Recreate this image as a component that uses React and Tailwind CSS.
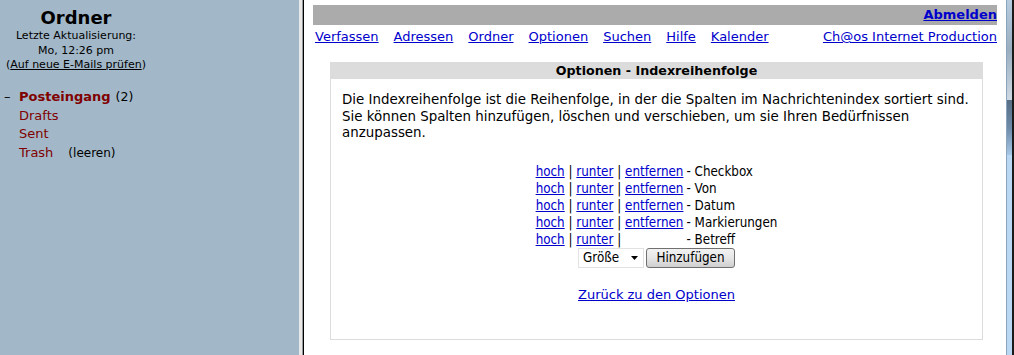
const folders = [
  { name: "Posteingang", extra: "(2)", bold: true, open: true },
  { name: "Drafts" },
  { name: "Sent" },
  { name: "Trash", extra: "(leeren)", gap: true },
];

const navLinks = ["Verfassen", "Adressen", "Ordner", "Optionen", "Suchen", "Hilfe", "Kalender"];

const columns = [
  { label: "Checkbox", remove: true },
  { label: "Von", remove: true },
  { label: "Datum", remove: true },
  { label: "Markierungen", remove: true },
  { label: "Betreff", remove: false },
];

const verdana = { fontFamily: '"DejaVu Sans", Verdana, sans-serif' };
const tahoma = { fontFamily: '"DejaVu Sans Condensed", "DejaVu Sans", Tahoma, sans-serif', fontStretch: "condensed" };

function LeftFrame() {
  return (
    <div className="w-[299px] h-full bg-[#a2b8c8] shrink-0" style={verdana}>
      <div className="w-[152px] flex flex-col items-center pt-[7px] text-black">
        <div className="text-[18px] font-bold leading-[22px]">Ordner</div>
        <div className="text-[11px] leading-[14px]">Letzte Aktualisierung:</div>
        <div className="text-[11px] leading-[14px] mt-[1px]">Mo, 12:26 pm</div>
        <div className="text-[11px] leading-[14px]">
          (<a href="#" className="underline">Auf neue E-Mails prüfen</a>)
        </div>
      </div>
      <div className="mt-[16px] flex flex-col text-[13px] leading-[18.7px]">
        {folders.map((f) => (
          <div key={f.name} className="flex items-center">
            <span className="w-[19px] pl-[4px] text-black">{f.open ? "–" : ""}</span>
            <a href="#" className={`text-[#800000] ${f.bold ? "font-bold" : ""}`}>
              {f.name}
            </a>
            {f.extra && (
              <span className={`text-[#000000] ${f.gap ? "ml-[15px] text-[12px]" : "ml-[5px] text-[12.5px]"}`}>{f.extra}</span>
            )}
          </div>
        ))}
      </div>
    </div>
  );
}

function FrameDivider() {
  return (
    <div className="flex h-full shrink-0">
      <div className="w-[3px] bg-[#e8e8e8]" />
      <div className="w-[1px] bg-[#9a9a9a]" />
      <div className="w-[1px] bg-black" />
    </div>
  );
}

function Scrollbar() {
  return (
    <div className="flex h-full shrink-0">
      <div className="w-[1px] bg-[#8aa4bc]" />
      <div className="w-[5px] flex flex-col">
        <div className="h-[100px] bg-gradient-to-b from-[#b8cde0] via-[#9aaec0] to-[#cfd9e3]" />
        <div className="h-[55px] bg-gradient-to-b from-[#586e84] via-[#6d8aa8] to-[#a8c8e8]" />
        <div className="flex-1 bg-[#b9d6f2]" />
      </div>
      <div className="w-[2px] bg-[#1a1a1a]" />
    </div>
  );
}

function OrderRow({ col }) {
  return (
    <>
      <div className="whitespace-pre text-[#000]">
        <a href="#" className="text-[#0000cc] underline">hoch</a>
        {" | "}
        <a href="#" className="text-[#0000cc] underline">runter</a>
        {" | "}
        {col.remove && (
          <a href="#" className="text-[#0000cc] underline">entfernen</a>
        )}
      </div>
      <div className="whitespace-pre pl-[3px]">- {col.label}</div>
    </>
  );
}

function RightFrame() {
  return (
    <div className="flex-1 h-full bg-white pl-[9px] pr-[9px] pt-[5px]">
      <div className="h-[20px] bg-[#ababab] flex items-center justify-end" style={verdana}>
        <a href="#" className="text-[13px] font-bold text-[#0000cc] underline">Abmelden</a>
      </div>
      <div className="flex items-center justify-between h-[24px] text-[13px] pl-[2px]" style={verdana}>
        <div className="flex gap-[15px]">
          {navLinks.map((l) => (
            <a key={l} href="#" className="text-[#0000cc] underline">{l}</a>
          ))}
        </div>
        <a href="#" className="text-[#0000cc] underline">Ch@os Internet Production</a>
      </div>

      <div className="ml-[17px] w-[653px] mt-[13px] text-[13px] text-black" style={verdana}>
        <div className="h-[17px] bg-[#dcdcdc] flex items-center justify-center font-bold text-[12.7px]">
          Optionen - Indexreihenfolge
        </div>
        <div className="h-[261px] border border-t-0 border-[#dcdcdc] flex flex-col">
          <p className="px-[11px] pt-[13px] leading-[16.5px] text-[13.4px]">
            Die Indexreihenfolge ist die Reihenfolge, in der die Spalten im Nachrichtenindex sortiert sind.
            <br />
            Sie können Spalten hinzufügen, löschen und verschieben, um sie Ihren Bedürfnissen
            <br />
            anzupassen.
          </p>
          <div className="mt-[21px] self-center grid grid-cols-[auto_auto] leading-[17px] text-[13.3px]" style={tahoma}>
            {columns.map((c) => (
              <OrderRow key={c.label} col={c} />
            ))}
          </div>
          <div className="self-center flex items-center gap-[2px] h-[20px]" style={tahoma}>
            <div className="w-[66px] h-[20px] border border-[#e2e2e2] bg-white flex items-center justify-between pl-[4px] pr-[5px] text-[13.3px]">
              <span>Größe</span>
              <svg width="7" height="4" viewBox="0 0 7 4">
                <path d="M0 0 L7 0 L3.5 4 Z" fill="#000" />
              </svg>
            </div>
            <button className="w-[89px] h-[20px] border border-[#707070] rounded-[3px] bg-gradient-to-b from-[#f2f2f2] via-[#e6e6e6] to-[#cfcfcf] text-[13.3px] leading-none">
              Hinzufügen
            </button>
          </div>
          <div className="self-center mt-[17px]">
            <a href="#" className="text-[#0000cc] underline">Zurück zu den Optionen</a>
          </div>
        </div>
      </div>
    </div>
  );
}

export default function App() {
  return (
    <div className="w-[1014px] h-[355px] flex overflow-hidden bg-white">
      <LeftFrame />
      <FrameDivider />
      <RightFrame />
      <Scrollbar />
    </div>
  );
}
